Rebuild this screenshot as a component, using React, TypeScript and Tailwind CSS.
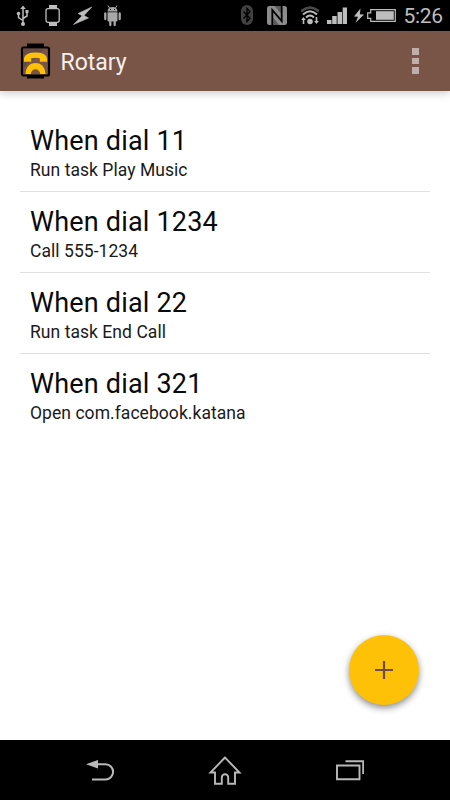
import { ReactNode } from 'react';

const rules = [
	{ dial: '11', action: 'Run task Play Music' },
	{ dial: '1234', action: 'Call 555-1234' },
	{ dial: '22', action: 'Run task End Call' },
	{ dial: '321', action: 'Open com.facebook.katana' },
];

type IconProps = { width: number; className?: string; children: ReactNode };

// every status icon is as tall as the bar, only the width differs
const StatusIcon = ({ width, className = '', children }: IconProps) => (
	<svg className={`shrink-0 ${className}`} width={width} height={31} viewBox={`0 0 ${width} 31`} fill="none">
		{children}
	</svg>
);

const StatusBar = () => (
	<header className="flex h-[31px] shrink-0 items-center bg-black pl-4 text-[#bdbdbd]">
		<StatusIcon width={13}>
			<path d="M7 7v17M7 20.500l-4.500-3V14M7 18.500l4-2.500v-4" stroke="currentColor" strokeWidth="1.500" />
			<path d="M7 5.500l2.800 3.500H4.200z" fill="currentColor" />
			<circle cx="7" cy="24" r="2" fill="currentColor" />
			<circle cx="2.500" cy="13.500" r="1.700" fill="currentColor" />
			<path d="M9.500 10h3v3h-3z" fill="currentColor" />
		</StatusIcon>
		<StatusIcon width={15} className="ml-4">
			<path d="M4 5h8v3H4zM4 23h8v3H4z" fill="currentColor" />
			<rect x="1" y="8.700" width="13.200" height="13.600" rx="2" stroke="currentColor" strokeWidth="1.300" />
		</StatusIcon>
		<StatusIcon width={19} className="ml-[13px]">
			<path d="M18.800 7L5 13.500l4.200 2.200L.500 24.500 15.500 18l-4.500-2.500z" fill="currentColor" stroke="currentColor" strokeWidth=".6" />
		</StatusIcon>
		<StatusIcon width={17} className="ml-3 text-[#a8a8a8]">
			<path d="M3.500 11.500C3.500 8.500 5.500 7 8.500 7s5 1.500 5 4.500zM3.500 12.300h10v8.200a1 1 0 01-1 1h-8a1 1 0 01-1-1z" fill="currentColor" />
			<path d="M5.500 8L4 5.500M11.500 8L13 5.500" stroke="currentColor" />
			<path d="M1.300 13.500v5.500M15.700 13.500v5.500M6.300 21v4M10.700 21v4" stroke="currentColor" strokeWidth="2.300" strokeLinecap="round" />
			<path d="M6 9h1v1H6zM10 9h1v1h-1z" fill="#000" />
		</StatusIcon>
		<StatusIcon width={12} className="ml-[120px]">
			<rect y="5" width="12" height="20" rx="6" fill="#424242" />
			<path d="M2.500 11.500l6.500 6.800-3 3.200V8.500l3 3.200-6.500 6.800" stroke="#000" strokeWidth="1.400" />
		</StatusIcon>
		<StatusIcon width={20} className="ml-[14px] text-[#8c8c8c]">
			<path d="M2.500 6H17.500Q20 6 20 8.500v14q0 2.500-2.500 2.500h-15Q0 25 0 22.500v-14Q0 6 2.500 6z" fill="currentColor" />
			<path d="M5.300 25V10L14.700 21V6" stroke="#000" strokeWidth="1.800" />
			<path d="M7.500 6l6.500 7.500V6zM6.300 25v-7.500L12 25z" fill="#000" opacity=".35" />
		</StatusIcon>
		<StatusIcon width={18} className="ml-[14px]">
			<path d="M0 11.500Q9 3.500 18 11.500" stroke="#4a4a4a" strokeWidth="2.500" />
			<path d="M2 14.500Q9 8 16 14.500M5 17.500Q9 13.500 13 17.500" stroke="currentColor" strokeWidth="2" />
			<circle cx="9" cy="21.500" r="2.800" fill="currentColor" />
			<path d="M2.500 17l2.300 3H3.300v4H1.700v-4H.200zM15.500 24l2.300-3h-1.500v-4h-1.600v4h-1.500z" fill="currentColor" />
		</StatusIcon>
		<StatusIcon width={20} className="ml-2">
			<path d="M0 20h4.500v4H0zM5.200 16h4.500v8H5.200zM10.500 12h4.500v12h-4.500zM15.700 7.500h4.300V24h-4.300z" fill="currentColor" />
		</StatusIcon>
		<StatusIcon width={10} className="ml-[7px]">
			<path d="M6.500 8.500L0 16.500l4 .3L1.500 23 10 14.500l-4.200-.3z" fill="currentColor" />
		</StatusIcon>
		<StatusIcon width={29} className="ml-[3px]">
			<path d="M3.700 9.600h24.600v11.800H3.700v-3H.700v-5.500h3z" stroke="currentColor" strokeWidth="1.200" />
			<path d="M9 11.200h17.800v8.600H9z" fill="currentColor" />
		</StatusIcon>
		<span className="ml-[7.500px] mt-px text-[21px] leading-[31px] tracking-[-0.3px]">5:26</span>
	</header>
);

const AppBar = () => (
	<div className="z-10 flex h-[60px] shrink-0 items-center bg-[#795548] pl-5 pr-[31px] shadow-[0_2px_8px_rgba(0,0,0,0.22)]">
		<svg className="shrink-0" width="31" height="36" viewBox="0 0 31 36" fill="none">
			<path d="M7 .500h17v4H7zM7 32h17v3.500H7z" fill="#000" />
			<rect x="2" y="4.500" width="27" height="28" rx="1.500" fill="#795548" stroke="#000" strokeWidth="2.200" />
			<path d="M3 5.500h22L10 19l-7 7z" fill="#5d4540" opacity=".6" />
			<path d="M4 18.800v-3.600Q5 9.500 15.500 9.500T27 15.200v3.600h-7.200v-3.600q-4.300-1-8.600 0v3.600z" fill="#ffc107" />
			<path d="M5.500 31C5.700 24.500 9.500 20 15.500 20S25.300 24.500 25.500 31h-5.300a4.700 4.700 0 00-9.400 0z" fill="#ffc107" />
		</svg>
		<h1 className="ml-[9.500px] mt-[4px] text-[23px] text-[#f5efed]">Rotary</h1>
		<button type="button" aria-label="More options" className="ml-auto flex flex-col gap-[3px]">
			<span className="h-[6.500px] w-[7px] bg-[#c0aea8]" />
			<span className="h-[6.500px] w-[7px] bg-[#c0aea8]" />
			<span className="h-[6.500px] w-[7px] bg-[#c0aea8]" />
		</button>
	</div>
);

const NavBar = () => (
	<nav className="flex h-[60px] shrink-0 items-center bg-black pl-[86px] text-[#b9b9b9]">
		<svg width="30" height="34" viewBox="0 0 30 34" fill="none">
			<path d="M10 11.200h9.500a7.600 7.600 0 010 15.200H6" stroke="currentColor" strokeWidth="2" />
			<path d="M0 11.200L12 7v8.500z" fill="currentColor" />
		</svg>
		<svg className="ml-[92px]" width="34" height="34" viewBox="0 0 34 34" fill="none">
			<path d="M17 4.500L2.500 19.500H7v11.300h6.800V24.500a3.200 3.200 0 016.400 0v6.300H27V19.500h4.500z" stroke="currentColor" strokeWidth="1.900" />
		</svg>
		<svg className="ml-[94px]" width="28" height="34" viewBox="0 0 28 34" fill="none">
			<path d="M1 12.500h22.500v13.800H1zM9.500 8.300h17.700V21" stroke="currentColor" strokeWidth="1.900" />
		</svg>
	</nav>
);

const App = () => (
	<div className="flex h-screen w-full flex-col overflow-hidden bg-white font-['Roboto',sans-serif]">
		<StatusBar />
		<AppBar />
		<main className="relative grow px-5 pt-5">
			<ul className="divide-y divide-[#e0e0e0]">
				{rules.map(rule => (
					<li key={rule.dial} className="h-[81px] px-[10px] pt-[13px]">
						<h2 className="text-[27px] leading-[34px] tracking-[0.2px] text-[#0a0a0a]">When dial {rule.dial}</h2>
						<p className="text-[17.500px] leading-[25.500px] tracking-[0.05px] text-[#1a1a1a]">{rule.action}</p>
					</li>
				))}
			</ul>
			<button type="button" aria-label="Add" className="absolute bottom-[35px] right-[31px] flex h-[70px] w-[70px] items-center justify-center rounded-full bg-[#ffc107] pr-px shadow-[0_3px_7px_rgba(0,0,0,0.45)]">
				<svg width="18" height="18" viewBox="0 0 18 18">
					<path d="M9 0v18M0 9h18" stroke="#6d4c41" strokeWidth="2.200" />
				</svg>
			</button>
		</main>
		<NavBar />
	</div>
);

export default App;
